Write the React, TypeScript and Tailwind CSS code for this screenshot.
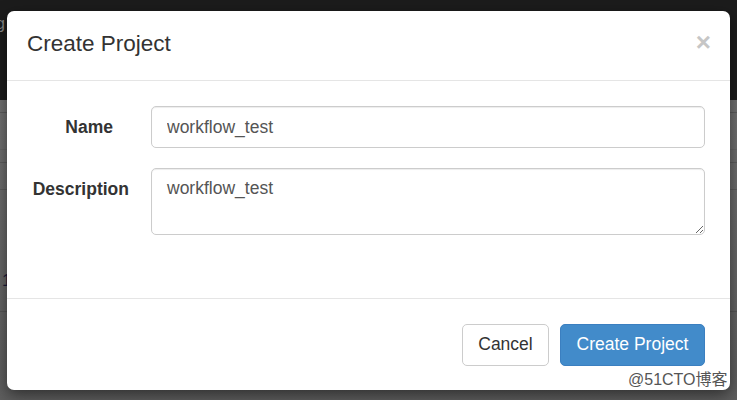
import React from "react";

export default function App() {
  const font = { fontFamily: '"Liberation Sans", Arial, sans-serif' };
  return (
    <div className="relative w-[737px] h-[400px] overflow-hidden" style={font}>
      {/* background page */}
      <div className="flex flex-col h-full">
        <div className="h-[100px] bg-[#1c1c1c] relative">
          <span className="absolute left-[-4px] top-[12px] text-[16px] text-[#8a8a8a]">g</span>
        </div>
        <div className="flex-1 flex flex-col bg-gradient-to-b from-[#717171] to-[#5e5e5e]">
          <div className="h-[13px] border-b border-[#5c5c5c]" />
          <div className="h-[37px] border-b border-[#666]" />
          <div className="h-[13px] border-b border-[#5c5c5c]" />
          <div className="h-[27px] border-b border-[#5c5c5c]" />
          <div className="h-[122px] border-b border-[#555] relative">
            <span className="absolute left-[2px] top-[78px] text-[17px] text-[#1a1a3a]">1</span>
          </div>
          <div className="flex-1" />
        </div>
      </div>

      {/* modal */}
      <div className="absolute left-[7px] top-[11px] w-[723px] h-[379px] rounded-[7px] bg-white shadow-[0_5px_15px_rgba(0,0,0,0.5)] flex flex-col">
        <div className="h-[70px] border-b border-[#e5e5e5] flex items-center justify-between pl-[20px] pr-[19px]">
          <h4 className="text-[22.5px] text-[#333] leading-none pb-[2px]">Create Project</h4>
          <span className="text-[26px] font-bold text-[#c6c6c6] leading-none pb-[8px]">×</span>
        </div>
        <div className="h-[217px] pt-[25px] pr-[25px] flex flex-col gap-[20px]">
          <div className="flex items-center">
            <label className="w-[144px] shrink-0 text-right pr-[38px] text-[17.5px] font-bold text-[#333]">Name</label>
            <input
              readOnly
              value="workflow_test"
              className="flex-1 h-[42px] border border-[#ccc] rounded-[5px] px-[15px] text-[17.5px] text-[#555] shadow-[inset_0_1px_1px_rgba(0,0,0,0.075)] outline-none"
              style={font}
            />
          </div>
          <div className="flex items-start">
            <label className="w-[144px] shrink-0 text-right pr-[22px] pt-[8px] text-[17.5px] font-bold text-[#333]">Description</label>
            <textarea
              readOnly
              defaultValue="workflow_test"
              className="flex-1 h-[67px] border border-[#ccc] rounded-[5px] px-[15px] pt-[7px] text-[17.5px] leading-[24px] text-[#555] shadow-[inset_0_1px_1px_rgba(0,0,0,0.075)] outline-none"
              style={font}
            />
          </div>
        </div>
        <div className="flex-1 border-t border-[#e5e5e5] flex items-center justify-end pr-[25px] gap-[11px]">
          <button className="h-[42px] w-[87px] border border-[#ccc] rounded-[5px] bg-white text-[17.5px] text-[#333]" style={font}>
            Cancel
          </button>
          <button className="h-[42px] w-[145px] border border-[#3b7fc0] rounded-[5px] bg-[#428bca] text-[17.5px] text-white" style={font}>
            Create Project
          </button>
        </div>
      </div>

      {/* watermark */}
      <span
        className="absolute left-[628px] top-[370px] text-[16px] text-[#555] leading-[20px]"
        style={{
          fontFamily: '"Liberation Sans", "Noto Sans CJK SC", sans-serif',
          textShadow: "0 0 2px #fff, 0 0 2px #fff",
        }}
      >
        @51CTO博客
      </span>
    </div>
  );
}
